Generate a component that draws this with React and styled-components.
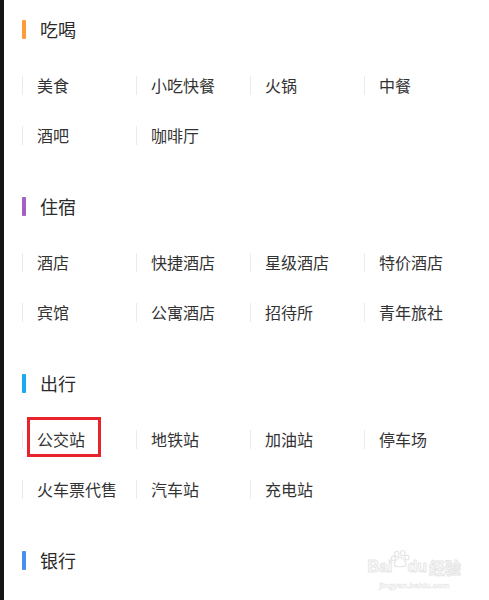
import styled, { createGlobalStyle } from 'styled-components';

const GlobalStyle = createGlobalStyle`
  html, body {
    margin: 0;
    padding: 0;
    background: #ffffff;
  }
  body {
    font-family: "Noto Sans CJK SC", "Noto Sans", sans-serif;
    color: #333;
  }
`;

// data for the category lists
const sections = [
  { title: '吃喝', color: '#ff9c3a', items: ['美食', '小吃快餐', '火锅', '中餐', '酒吧', '咖啡厅'] },
  { title: '住宿', color: '#a35fc2', items: ['酒店', '快捷酒店', '星级酒店', '特价酒店', '宾馆', '公寓酒店', '招待所', '青年旅社'] },
  { title: '出行', color: '#1ba9ef', items: ['公交站', '地铁站', '加油站', '停车场', '火车票代售', '汽车站', '充电站'], marked: '公交站' },
  { title: '银行', color: '#4a8eec', items: [] },
];

const Page = styled.div`
  position: relative;
  box-sizing: border-box;
  width: 489px;
  height: 600px;
  overflow: hidden;
  border-left: 4px solid #141414;
  padding: 19px 11px 0 18px;
`;

const Section = styled.section`
  margin-bottom: 36px;
`;

const Header = styled.div`
  display: flex;
  align-items: center;
  height: 20px;
  gap: 14px;
`;

const Bar = styled.span`
  width: 4px;
  height: 19px;
  background: ${props => props.$color};
  border-radius: 1px;
`;

const Title = styled.h2`
  margin: 0;
  font-size: 18px;
  font-weight: 400;
  color: #2b2b2b;
  line-height: 20px;
`;

const Grid = styled.div`
  display: grid;
  grid-template-columns: repeat(4, 114px);
  grid-auto-rows: 50px;
  margin-top: 21px;
`;

const Cell = styled.div`
  position: relative;
  display: flex;
  align-items: center;
`;

const Item = styled.span`
  display: flex;
  align-items: center;
  height: 19px;
  padding-left: 14px;
  border-left: 1px solid #ebebeb;
  font-size: 16px;
  color: #333;
  white-space: nowrap;
`;

// red annotation box drawn over the item
const Mark = styled.span`
  position: absolute;
  left: 5px;
  top: 3px;
  width: 74px;
  height: 40px;
  box-sizing: border-box;
  border: 3px solid #e8232b;
`;

const Watermark = styled.div`
  position: absolute;
  right: 28px;
  bottom: 10px;
  display: flex;
  flex-direction: column;
  align-items: center;
  color: #fff;
  pointer-events: none;
`;

const Logo = styled.div`
  display: flex;
  align-items: flex-end;
  font-family: "Liberation Sans", Arial, sans-serif;
  font-weight: 700;
  font-size: 16px;
  line-height: 18px;
  -webkit-text-stroke: 1px #e6e6e6;

  .cn {
    font-family: "Noto Sans CJK SC", sans-serif;
    margin-left: 2px;
  }
`;

const Domain = styled.div`
  margin-top: 5px;
  font-family: "Liberation Sans", Arial, sans-serif;
  font-size: 8px;
  font-weight: 700;
  -webkit-text-stroke: 0.5px #e6e6e6;
`;

const Paw = () => (
  <svg width="22" height="24" viewBox="0 0 26 26" style={{ margin: '0 -5px 4px -2px' }}>
    <g fill="#fff" stroke="#e6e6e6" strokeWidth="1.4">
      <ellipse cx="8" cy="6" rx="2.6" ry="3.2" />
      <ellipse cx="15" cy="5" rx="2.6" ry="3.2" />
      <ellipse cx="4" cy="11" rx="2.3" ry="2.8" />
      <ellipse cx="20" cy="10" rx="2.3" ry="2.8" />
      <path d="M12 10c3 0 7 5 7 8s-3 3-7 3-7 0-7-3 4-8 7-8z" />
    </g>
  </svg>
);

export default function App() {
  return (
    <>
      <GlobalStyle />
      <Page>
        {sections.map(section => (
          <Section key={section.title}>
            <Header>
              <Bar $color={section.color} />
              <Title>{section.title}</Title>
            </Header>
            {section.items.length > 0 && (
              <Grid>
                {section.items.map(item => (
                  <Cell key={item}>
                    <Item>{item}</Item>
                    {section.marked === item && <Mark />}
                  </Cell>
                ))}
              </Grid>
            )}
          </Section>
        ))}
        <Watermark>
          <Logo>
            Bai<Paw />du<span className="cn">经验</span>
          </Logo>
          <Domain>jingyan.baidu.com</Domain>
        </Watermark>
      </Page>
    </>
  );
}
